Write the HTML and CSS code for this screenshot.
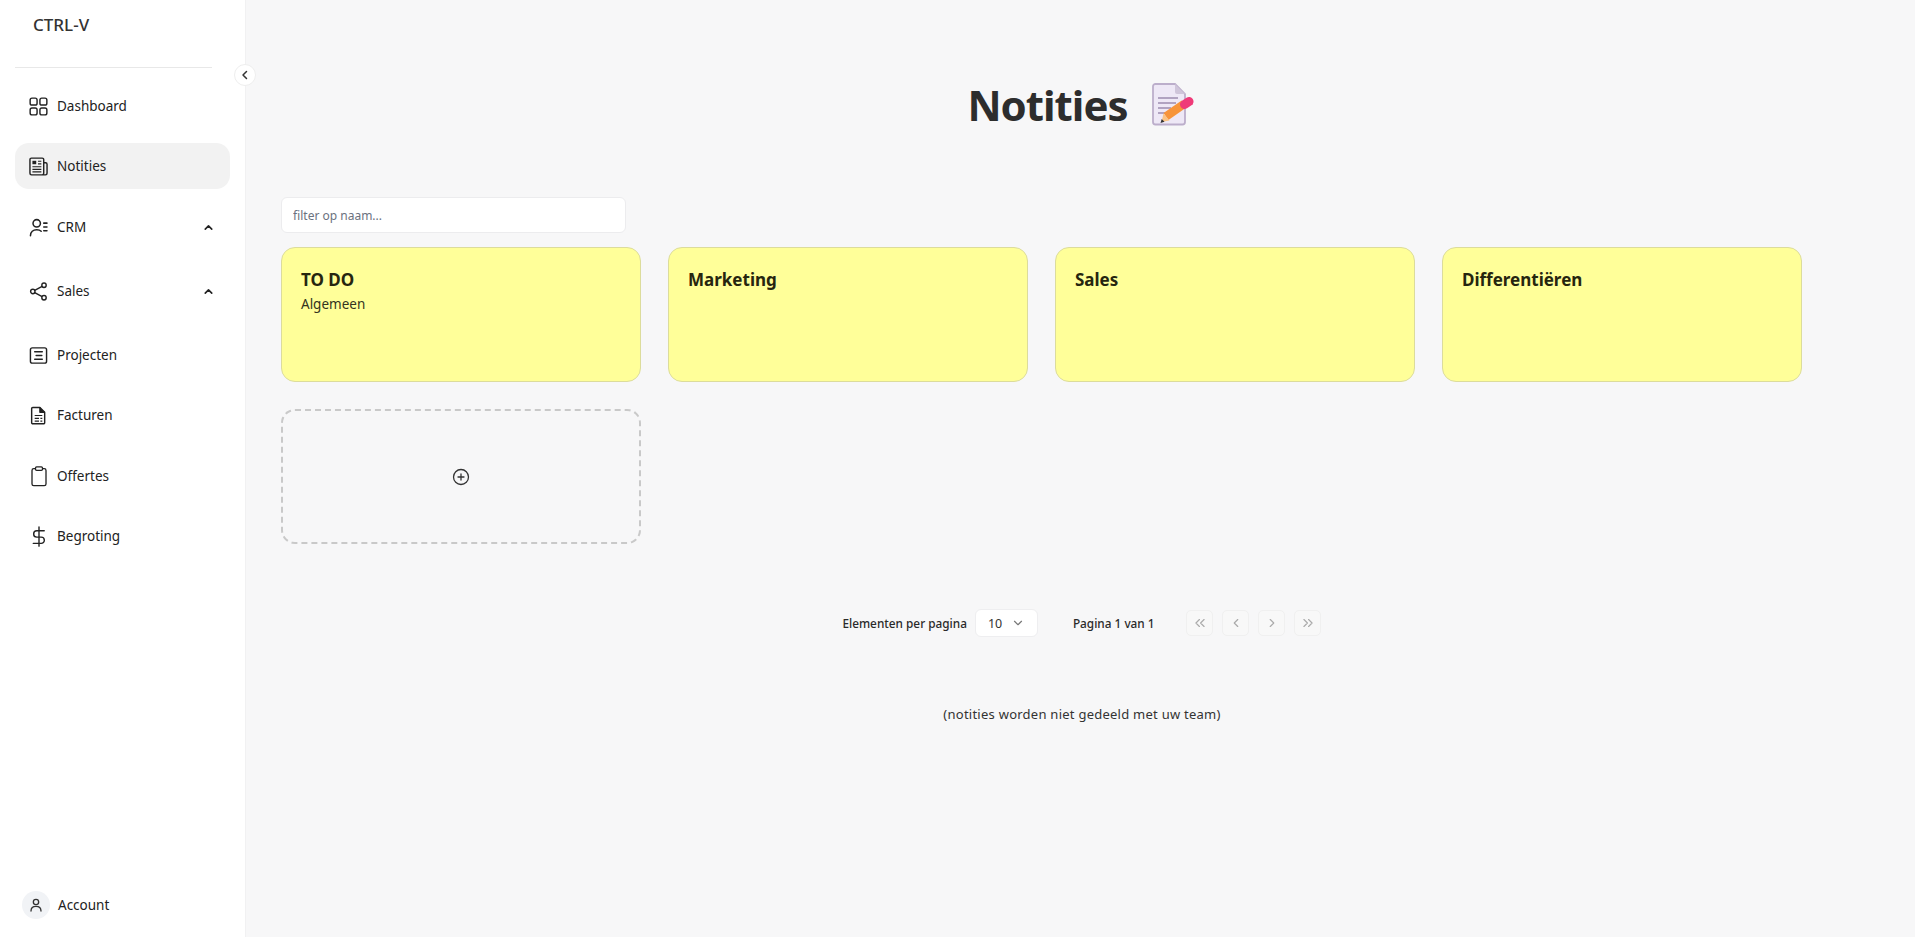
FILE: index.html
```html
<!DOCTYPE html>
<html lang="nl">
<head>
<meta charset="utf-8">
<title>Notities</title>
<link rel="stylesheet" href="styles.css">
</head>
<body>
<div class="app">
  <aside class="sidebar">
    <div class="brand">CTRL-V</div>
    <div class="divider"></div>
    <button class="collapse" aria-label="Inklappen">
      <svg viewBox="0 0 24 24" width="12" height="12" fill="none" stroke="#333" stroke-width="3" stroke-linecap="round" stroke-linejoin="round"><path d="M15 5l-7 7 7 7"/></svg>
    </button>
    <nav class="nav">
      <a class="nav-item i-dash">
        <svg class="ico" viewBox="0 0 20 20" fill="none" stroke="#222" stroke-width="1.5"><rect x="1.2" y="1.2" width="7.3" height="7.3" rx="2"/><rect x="11.5" y="1.2" width="7.3" height="7.3" rx="2"/><rect x="1.2" y="11.5" width="7.3" height="7.3" rx="2"/><rect x="11.5" y="11.5" width="7.3" height="7.3" rx="2"/></svg>
        <span>Dashboard</span>
      </a>
      <a class="nav-item active">
        <svg class="ico" viewBox="0 0 20 20" fill="none" stroke="#222" stroke-width="1.5"><path d="M15.5 3v14.2a1.6 1.6 0 0 1-1.6 1.6H2.6A1.6 1.6 0 0 1 1 17.2V2.8A1.6 1.6 0 0 1 2.6 1.2h11.3a1.6 1.6 0 0 1 1.6 1.6zM15.5 6h2a1.5 1.5 0 0 1 1.5 1.5v9.7a1.6 1.6 0 0 1-1.6 1.6H14"/><rect x="3.6" y="4" width="4" height="3.6" fill="#222" stroke="none"/><path d="M9.5 4.5h3.5M9.5 7.2h3.5M3.6 10.3h9.4M3.6 13h9.4M3.6 15.6h9.4" stroke-width="1.2"/></svg>
        <span>Notities</span>
      </a>
      <a class="nav-item i-crm">
        <svg class="ico wide" viewBox="0 0 20 20" fill="none" stroke="#222" stroke-width="1.6" stroke-linecap="round"><circle cx="7.6" cy="5.6" r="3.9"/><path d="M1 18.6c0-4 2.8-6.2 6.6-6.2 2 0 3.6.5 4.7 1.5"/><path d="M15 5.400h3.400M15 9.400h3.400M15 13.400h3.400"/></svg>
        <span class="tight">CRM</span>
        <svg class="chev" viewBox="0 0 24 24" fill="none" stroke="#222" stroke-width="3" stroke-linecap="round" stroke-linejoin="round"><path d="M6 15l6-6 6 6"/></svg>
      </a>
      <a class="nav-item i-sales">
        <svg class="ico" viewBox="0 0 20 20" fill="none" stroke="#222" stroke-width="1.5"><circle cx="15.8" cy="3.4" r="2.3"/><circle cx="4" cy="10" r="2.3"/><circle cx="15.8" cy="16.6" r="2.3"/><path d="M6 8.8l7.8-4.3M6 11.2l7.8 4.3"/></svg>
        <span class="tight">Sales</span>
        <svg class="chev" viewBox="0 0 24 24" fill="none" stroke="#222" stroke-width="3" stroke-linecap="round" stroke-linejoin="round"><path d="M6 15l6-6 6 6"/></svg>
      </a>
      <a class="nav-item i-proj">
        <svg class="ico" viewBox="0 0 20 20" fill="none" stroke="#222" stroke-width="1.5" stroke-linecap="round"><rect x="1.5" y="2" width="17" height="16" rx="2"/><path d="M6 6h8M7.5 10h6M6 14h8"/></svg>
        <span>Projecten</span>
      </a>
      <a class="nav-item i-fact">
        <svg class="ico" viewBox="0 0 20 20" fill="none" stroke="#222" stroke-width="1.5" stroke-linejoin="round"><path d="M4 1.500h7.500l5 5v11a1.200 1.200 0 0 1-1.200 1.200H4a1.200 1.200 0 0 1-1.200-1.200V2.700A1.200 1.200 0 0 1 4 1.500z"/><path d="M11.500 1.500v5h5" fill="#222"/><path d="M6 10h8M6 13h4.500M12 13h2M6 16h4.500M12 16h2" stroke-width="1.300"/></svg>
        <span>Facturen</span>
      </a>
      <a class="nav-item i-off">
        <svg class="ico tall" viewBox="0 0 20 24" fill="none" stroke="#222" stroke-width="1.5" stroke-linejoin="round"><path d="M6 3H4a2 2 0 0 0-2 2v15.500a2 2 0 0 0 2 2h12a2 2 0 0 0 2-2V5a2 2 0 0 0-2-2h-2"/><rect x="6" y="1" width="8" height="4" rx="1.300"/></svg>
        <span>Offertes</span>
      </a>
      <a class="nav-item i-beg">
        <svg class="ico tall" viewBox="0 0 20 24" fill="none" stroke="#222" stroke-width="1.6" stroke-linecap="round"><path d="M10 1v22M16 5.500H7.500a3.600 3.600 0 0 0 0 7.200h5a3.600 3.600 0 0 1 0 7.200H3.500"/></svg>
        <span>Begroting</span>
      </a>
    </nav>
    <div class="account">
      <span class="avatar">
        <svg viewBox="0 0 24 24" width="16" height="16" fill="none" stroke="#333" stroke-width="2" stroke-linecap="round"><circle cx="12" cy="7.500" r="4"/><path d="M4.500 21c0-4.500 3-7 7.500-7s7.500 2.500 7.500 7"/></svg>
      </span>
      <span>Account</span>
    </div>
  </aside>
  <main class="main">
    <header class="title-row">
      <h1>Notities</h1>
      <svg class="emoji" viewBox="0 0 42 44">
        <path d="M3.500 1H23l10 10v28a2.500 2.500 0 0 1-2.500 2.500h-27A2.500 2.500 0 0 1 1 39V3.500A2.500 2.500 0 0 1 3.500 1z" fill="#eee8f6" stroke="#bcaecb" stroke-width="1.800"/>
        <path d="M23 1l10 10h-8a2 2 0 0 1-2-2z" fill="#cfc5da"/>
        <path d="M6 15h20M6 20h18M6 25h13M6 30h8" stroke="#9d8cb0" stroke-width="1.600"/>
        <path d="M14 33.500L32 21" stroke="#f7943a" stroke-width="8.500"/>
        <path d="M9.500 39l2-8.500 6 7z" fill="#fbc384"/>
        <path d="M8.500 40l1.200-4 2.800 2.800z" fill="#333"/>
        <path d="M32.500 21.500L37 18.500" stroke="#ef3a78" stroke-width="9" stroke-linecap="round"/>
      </svg>
    </header>
    <input class="filter" type="text" placeholder="filter op naam...">
    <section class="grid">
      <article class="note"><h2>TO DO</h2><p>Algemeen</p></article>
      <article class="note"><h2>Marketing</h2></article>
      <article class="note"><h2>Sales</h2></article>
      <article class="note"><h2>Differentiëren</h2></article>
      <button class="note-add" aria-label="Notitie toevoegen">
        <svg viewBox="0 0 24 24" width="18" height="18" fill="none" stroke="#333" stroke-width="1.700" stroke-linecap="round"><circle cx="12" cy="12" r="10"/><path d="M12 8v8M8 12h8"/></svg>
      </button>
    </section>
    <div class="pager">
      <span class="pager-label">Elementen per pagina</span>
      <div class="select">10
        <svg viewBox="0 0 24 24" width="14" height="14" fill="none" stroke="#777" stroke-width="2" stroke-linecap="round" stroke-linejoin="round"><path d="M6 9l6 6 6-6"/></svg>
      </div>
      <span class="pager-page">Pagina 1 van 1</span>
      <div class="pager-btns">
        <button class="pg"><svg viewBox="0 0 24 24" fill="none" stroke="#aaa" stroke-width="2" stroke-linecap="round" stroke-linejoin="round"><path d="M11 6l-6 6 6 6M19 6l-6 6 6 6"/></svg></button>
        <button class="pg"><svg viewBox="0 0 24 24" fill="none" stroke="#aaa" stroke-width="2" stroke-linecap="round" stroke-linejoin="round"><path d="M15 6l-6 6 6 6"/></svg></button>
        <button class="pg"><svg viewBox="0 0 24 24" fill="none" stroke="#aaa" stroke-width="2" stroke-linecap="round" stroke-linejoin="round"><path d="M9 6l6 6-6 6"/></svg></button>
        <button class="pg"><svg viewBox="0 0 24 24" fill="none" stroke="#aaa" stroke-width="2" stroke-linecap="round" stroke-linejoin="round"><path d="M5 6l6 6-6 6M13 6l6 6-6 6"/></svg></button>
      </div>
    </div>
    <p class="note-info">(notities worden niet gedeeld met uw team)</p>
  </main>
</div>
</body>
</html>
```
FILE: styles.css
```css
* { box-sizing: border-box; }
html, body { margin: 0; height: 100%; overflow: hidden; }
body { font-family: "Noto Sans", "Open Sans", sans-serif; color: #222; background: #f7f7f8; }
.app { display: flex; height: 937px; }

.sidebar { position: relative; width: 246px; flex: none; background: #fff; display: flex; flex-direction: column; padding: 0 15px; border-right: 1px solid #f1f1f2; }
.brand { font-size: 17px; font-weight: 500; color: #333; padding: 13px 0 0 18px; height: 67px; }
.divider { height: 1px; background: #e8e8e8; width: 197px; }
.collapse { position: absolute; left: 234px; top: 64px; width: 22px; height: 22px; border-radius: 50%; background: #fff; border: 1px solid #eee; padding: 0; display: flex; align-items: center; justify-content: center; z-index: 2; }
.nav { display: flex; flex-direction: column; margin-top: 15px; }
.nav-item { display: flex; align-items: center; height: 46px; font-size: 13.5px; padding-left: 14px; color: #222; border-radius: 14px; width: 215px; margin-bottom: 14px; }
.nav-item.active { background: #f2f2f2; margin-bottom: 15px; }
.ico { width: 19px; height: 19px; flex: none; margin-right: 9px; }
.ico.wide { width: 20px; margin-right: 8px; }
.ico.tall { width: 18px; height: 21px; margin-right: 9px; }
.tight { flex: 1; }
.chev { width: 13px; height: 13px; flex: none; margin-right: 15px; }
.i-crm { margin-bottom: 18px; }
.i-sales { margin-bottom: 18px; }
.i-proj { margin-bottom: 14px; }
.i-fact { margin-bottom: 15px; }
.i-off { margin-bottom: 14px; }
.i-off .ico, .i-beg .ico { margin-left: 1px; }
.account { position: absolute; left: 22px; top: 891px; display: flex; align-items: center; gap: 8px; font-size: 13.5px; }
.avatar { width: 28px; height: 28px; border-radius: 50%; background: #f1f3f6; display: flex; align-items: center; justify-content: center; }

.main { flex: 1; padding: 0 35px; min-width: 0; display: flex; flex-direction: column; }
.title-row { display: flex; align-items: center; justify-content: center; height: 197px; padding-top: 12px; gap: 24px; flex: none; }
h1 { margin: 0; font-size: 42px; letter-spacing: -1px; font-weight: 700; color: #2d2d2d; line-height: 1; }
.emoji { width: 42px; height: 44px; flex: none; }
.filter { width: 345px; height: 36px; border: 1px solid #ececee; border-radius: 6px; background: #fff; padding: 0 11px; font: 12px "Noto Sans", sans-serif; color: #333; flex: none; }
.filter::placeholder { color: #6b7280; opacity: 1; }
.grid { display: grid; grid-template-columns: repeat(4, 360px); gap: 27px; margin-top: 14px; }
.note { height: 135px; background: #ffff99; border: 1px solid #dcdc9c; border-radius: 14px; padding: 20px 19px; }
.note h2 { margin: 0; font-size: 17px; font-weight: 700; line-height: 24px; color: #26260f; }
.note p { margin: 3px 0 0; font-size: 13.5px; line-height: 18px; color: #333320; }
.note-add { height: 135px; background: transparent; border: 2px dashed #c9c9c9; border-radius: 14px; display: flex; align-items: center; justify-content: center; padding: 0; }

.pager { display: flex; align-items: center; justify-content: center; margin-top: 65px; height: 28px; font-size: 11.8px; font-weight: 500; padding-left: 2px; }
.pager-label { color: #2a2a2a; margin-right: 8px; }
.select { width: 63px; height: 28px; background: #fff; border: 1px solid #eeeef0; border-radius: 6px; display: flex; align-items: center; justify-content: space-between; padding: 0 12px; font-weight: 400; color: #333; font-size: 12.5px; }
.pager-page { margin-left: 35px; margin-right: 31px; color: #2a2a2a; }
.pager-btns { display: flex; gap: 9px; }
.pg { width: 27px; height: 26px; padding: 5px 6px; background: #f8f8f8; border: 1px solid #f0f0f0; border-radius: 5px; }
.pg svg { display: block; width: 14px; height: 14px; }
.note-info { margin: 68px 0 0; padding-left: 3px; font-size: 13px; letter-spacing: .25px; text-align: center; color: #333; }
```
